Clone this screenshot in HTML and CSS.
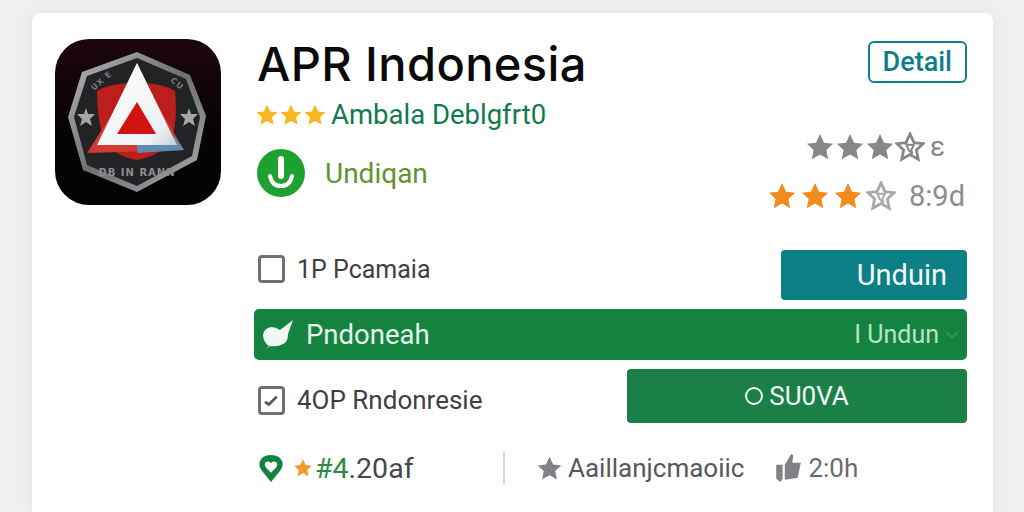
FILE: index.html
```html
<!DOCTYPE html>
<html lang="en">
<head>
    <meta charset="UTF-8">
    <meta name="viewport" content="width=device-width, initial-scale=1.0">
    <title>APR Indonesia</title>
    <link rel="stylesheet" href="styles.css">
</head>
<body>
    <svg class="defs" width="0" height="0">
        <symbol id="star" viewBox="0 0 24 24">
            <path d="M12 1.5l3.2 7 7.3.8-5.4 5 1.5 7.5-6.6-3.8-6.6 3.8 1.5-7.5-5.4-5 7.3-.8z"/>
        </symbol>
        <symbol id="star-open" viewBox="0 0 24 24">
            <path d="M12 1.5l3.2 7 7.3.8-5.4 5 1.5 7.5-6.6-3.8-6.6 3.8 1.5-7.5-5.4-5 7.3-.8z" fill="none" stroke="currentColor" stroke-width="2.2"/>
            <path d="M9 10l6 .5-2 4 1 3-3-3z" fill="none" stroke="currentColor" stroke-width="1.6"/>
        </symbol>
    </svg>

    <div class="card">
        <!-- App logo -->
        <svg class="logo" viewBox="0 0 166 166">
            <defs>
                <linearGradient id="bg" x1="0" y1="0" x2="0" y2="1">
                    <stop offset="0" stop-color="#1c060b"/>
                    <stop offset="0.55" stop-color="#070304"/>
                    <stop offset="1" stop-color="#030303"/>
                </linearGradient>
                <linearGradient id="ring" x1="0" y1="0" x2="1" y2="1">
                    <stop offset="0" stop-color="#b5b7ba"/>
                    <stop offset="0.5" stop-color="#6d6f72"/>
                    <stop offset="1" stop-color="#a9abae"/>
                </linearGradient>
                <linearGradient id="tri" x1="0" y1="0" x2="1" y2="1">
                    <stop offset="0" stop-color="#ffffff"/>
                    <stop offset="0.8" stop-color="#eef1f4"/>
                    <stop offset="1" stop-color="#c3cdd8"/>
                </linearGradient>
            </defs>
            <rect width="166" height="166" rx="34" fill="url(#bg)"/>
            <polygon points="82,13 135,36 151,77 142,121 82,153 28,131 13,78 27,33" fill="url(#ring)"/>
            <polygon points="82,19 131,40 145,78 137,117 82,147 32,126 19,78 32,37" fill="#232325"/>
            <path d="M42 52q12-8 40-8 26 0 38 8 3 32-4 48-8 16-34 21-24-4-33-21-7-18-7-48z" fill="#bb1f1c"/>
            <polygon points="82,24 105,70 129,111 32,114 60,70" fill="#cf3a33"/>
            <polygon points="82,114 129,111 120,98 82,98" fill="#5f8bb0"/>
            <polygon points="82,24 122,106 42,106" fill="url(#tri)"/>
            <polygon points="82,63 101,95 62,95" fill="#d3130f"/>
            <polygon points="31,69 33,75 40,75 35,80 37,87 31,83 25,87 27,80 22,75 29,75" fill="#a5a6a8"/>
            <polygon points="134,69 136,75 143,75 138,80 140,87 134,83 128,87 130,80 125,75 132,75" fill="#a5a6a8"/>
            <text class="logo-text" x="82" y="137" text-anchor="middle">DB IN RANN</text>
            <text class="logo-text logo-small" transform="translate(39 52) rotate(-42)">UX E</text>
            <text class="logo-text logo-small" transform="translate(115 42) rotate(40)">CU</text>
        </svg>

        <div class="main">
            <div class="top">
                <div class="top-left">
                    <h1>APR Indonesia</h1>
                    <div class="meta">
                        <span class="stars gold">
                            <svg><use href="#star"/></svg><svg><use href="#star"/></svg><svg><use href="#star"/></svg>
                        </span>
                        <span>Ambala Deblgfrt0</span>
                    </div>
                    <div class="status">
                        <svg class="status-icon" viewBox="0 0 48 48">
                            <circle cx="24" cy="24" r="24" fill="#1ea12f"/>
                            <path d="M24 10v17" stroke="#fff" stroke-width="6" stroke-linecap="round"/>
                            <path d="M13 27q2 10 11 10t11-10" fill="none" stroke="#fff" stroke-width="4" stroke-linecap="round"/>
                        </svg>
                        <span>Undiqan</span>
                    </div>
                </div>
                <div class="top-right">
                    <a class="detail">Detail</a>
                    <div class="rate rate-gray">
                        <span class="stars">
                            <svg><use href="#star"/></svg><svg><use href="#star"/></svg><svg><use href="#star"/></svg><svg><use href="#star-open"/></svg>
                        </span>
                        <span>&#949;</span>
                    </div>
                    <div class="rate rate-orange">
                        <span class="stars">
                            <svg><use href="#star"/></svg><svg><use href="#star"/></svg><svg><use href="#star"/></svg><svg class="open"><use href="#star-open"/></svg>
                        </span>
                        <span class="rate-num">8:9d</span>
                    </div>
                </div>
            </div>

            <div class="rows">
                <div class="row row-plain row-first">
                    <div class="row-label">
                        <span class="box"></span>
                        <span>1P Pcamaia</span>
                    </div>
                    <button class="btn btn-teal">Unduin</button>
                </div>
                <div class="row row-green">
                    <div class="row-label">
                        <svg class="leaf" viewBox="0 0 30 30">
                            <path d="M2 30L6 26Q0 22 0 15Q1 8 8 7Q13 7 17 10L30 0L25 14Q25 22 20 24Q15 27 7 26z" fill="#eef7f0"/>
                        </svg>
                        <span>Pndoneah</span>
                    </div>
                    <div class="row-end">
                        <span>I Undun</span>
                        <svg class="chev" viewBox="0 0 16 16"><path d="M2 5l6 6 6-6" fill="none" stroke="#2c9a57" stroke-width="2"/></svg>
                    </div>
                </div>
                <div class="row row-plain row-last">
                    <div class="row-label">
                        <span class="box box-check">
                            <svg viewBox="0 0 16 16"><path d="M3 9l3 2 6-6" fill="none" stroke="#555" stroke-width="2"/></svg>
                        </span>
                        <span>4OP Rndonresie</span>
                    </div>
                    <button class="btn btn-green"><span class="ring"></span>SU0VA</button>
                </div>
            </div>

            <div class="foot">
                <div class="foot-left">
                    <svg class="pin" viewBox="0 0 24 28">
                        <path d="M12 27L3 16Q0 12 1 8q2-7 11-7t11 7q1 4-2 8z" fill="#12833f"/>
                        <path d="M12 18l-5-5q-2-3 0-5 3-2 5 1 2-3 5-1 2 2 0 5z" fill="#fff"/>
                    </svg>
                    <svg class="burst" viewBox="0 0 24 24"><use href="#star"/></svg>
                    <span><span class="hash">#4</span>.20af</span>
                </div>
                <span class="sep"></span>
                <svg class="foot-star" viewBox="0 0 24 24"><use href="#star"/></svg>
                <span class="foot-text">Aaillanjcmaoiic</span>
                <svg class="thumb" viewBox="0 0 24 28">
                    <path d="M1 11h6v13l-2 3-4-3z" fill="#808285"/>
                    <path d="M9 11l6-10 2 1-1 7h8l-3 14-12 2z" fill="#808285"/>
                </svg>
                <span class="foot-text foot-last">2:0h</span>
            </div>
        </div>
    </div>
</body>
</html>
```

FILE: styles.css
```css
body {
    margin: 0;
    height: 512px;
    overflow: hidden;
    padding: 13px 31px 0 32px;
    box-sizing: border-box;
    background-color: #eff0f1;
    font-family: Roboto, Arial, sans-serif;
}
.defs {
    position: absolute;
}
.card {
    display: flex;
    gap: 33px;
    height: 499px;
    padding: 26px 26px 0 23px;
    box-sizing: border-box;
    background: #fff;
    border-radius: 8px 8px 0 0;
    box-shadow: 0 0 18px rgba(0,0,0,0.06);
}
.logo {
    width: 166px;
    height: 166px;
    flex: none;
}
.logo-text {
    font-family: "DejaVu Sans", sans-serif;
    font-size: 10px;
    font-weight: bold;
    letter-spacing: 1px;
    fill: #8d8f92;
}
.logo-small {
    font-size: 8px;
    fill: #77797c;
}
.main {
    flex: 1;
    min-width: 0;
}
.top {
    display: flex;
    justify-content: space-between;
    height: 211px;
}
.top-left {
    padding-left: 3px;
}
h1 {
    margin: 0;
    font-family: Inter, Arial, sans-serif;
    font-size: 47px;
    line-height: 50px;
    letter-spacing: 0.4px;
    font-weight: 500;
    color: #0a0a0a;
}
.meta {
    display: flex;
    align-items: center;
    gap: 4px;
    margin: 11px 0 0 -2px;
    font-size: 27.5px;
    line-height: 30px;
    color: #117a4e;
}
.stars {
    display: inline-flex;
}
.stars svg {
    width: 24px;
    height: 24px;
    fill: currentColor;
}
.gold {
    color: #f7b824;
}
.status {
    display: flex;
    align-items: center;
    gap: 20px;
    margin-top: 19px;
    font-size: 28px;
    color: #5f9431;
}
.status-icon {
    width: 48px;
    height: 48px;
}
.top-right {
    display: flex;
    flex-direction: column;
    align-items: flex-end;
    color: #85878a;
}
.detail {
    padding: 0 13px;
    border: 2px solid #10808f;
    border-radius: 6px;
    line-height: 38px;
    font-size: 27px;
    font-weight: 500;
    color: #0e7c8c;
    margin-top: 2px;
}
.rate {
    display: flex;
    align-items: center;
}
.rate-gray {
    margin: 49px 22px 0 0;
    font-size: 28px;
    line-height: 30px;
    gap: 5px;
}
.rate-gray .stars svg {
    width: 30px;
    height: 30px;
}
.rate-orange {
    margin: 18px 2px 0 0;
    gap: 13px;
    font-size: 29px;
    line-height: 32px;
    color: #8b8d90;
}
.rate-orange .stars {
    color: #f28a1c;
    gap: 3px;
}
.rate-orange .stars svg {
    width: 30px;
    height: 30px;
}
.rate-orange .stars .open {
    color: #a6a8aa;
}
.rows {
    display: flex;
    flex-direction: column;
    gap: 9px;
}
.row {
    display: flex;
    align-items: center;
    justify-content: space-between;
    font-size: 25px;
}
.row-plain {
    color: #3d4043;
}
.row-first .row-label {
    margin-bottom: 12px;
}
.row-last .row-label {
    margin-top: 8px;
    font-size: 26px;
}
.row-label {
    display: flex;
    align-items: center;
    gap: 12px;
    padding-left: 4px;
}
.box {
    display: flex;
    width: 27px;
    height: 28px;
    border: 3px solid #6e7073;
    border-radius: 4px;
    box-sizing: border-box;
}
.box-check {
    height: 29px;
}
.btn {
    border: none;
    border-radius: 4px;
    color: #f2fbfa;
    font-family: inherit;
    font-size: 26px;
}
.btn-teal {
    width: 186px;
    height: 50px;
    padding: 0 20px 0 0;
    text-align: right;
    font-size: 29px;
    background-color: #0c7f87;
}
.btn-green {
    display: flex;
    align-items: center;
    justify-content: center;
    gap: 6px;
    width: 340px;
    height: 54px;
    background-color: #1a8046;
}
.ring {
    width: 18px;
    height: 18px;
    border: 2px solid #f2fbfa;
    border-radius: 50%;
    box-sizing: border-box;
}
.row-green {
    height: 51px;
    border-radius: 5px;
    background-color: #14833f;
    color: #e6f5ea;
    padding-right: 8px;
    font-size: 27.5px;
}
.row-green .row-label {
    padding-left: 9px;
    gap: 13px;
}
.leaf {
    width: 30px;
    height: 30px;
}
.row-end {
    display: flex;
    align-items: center;
    gap: 6px;
    font-size: 25px;
    color: #b6e3c3;
}
.chev {
    width: 14px;
    height: 14px;
}
.foot {
    display: flex;
    align-items: center;
    margin-top: 30px;
    padding-left: 4px;
    font-size: 26px;
    height: 30px;
    color: #55585b;
}
.foot-left {
    display: flex;
    align-items: center;
    width: 245px;
    font-size: 28.5px;
    color: #46494c;
}
.pin {
    width: 26px;
    height: 29px;
    margin-right: 9px;
}
.burst {
    width: 20px;
    height: 22px;
    margin-right: 2px;
    fill: #f29a2e;
}
.hash {
    color: #2a8a45;
}
.sep {
    width: 2px;
    height: 32px;
    background-color: #d6d8d9;
    margin-right: 31px;
}
.foot-star {
    width: 27px;
    height: 27px;
    fill: #808285;
    margin-right: 5px;
}
.foot-text {
    color: #55585b;
}
.foot-last {
    color: #6a6c6f;
}
.thumb {
    width: 28px;
    height: 30px;
    margin: 0 6px 0 30px;
}
```
